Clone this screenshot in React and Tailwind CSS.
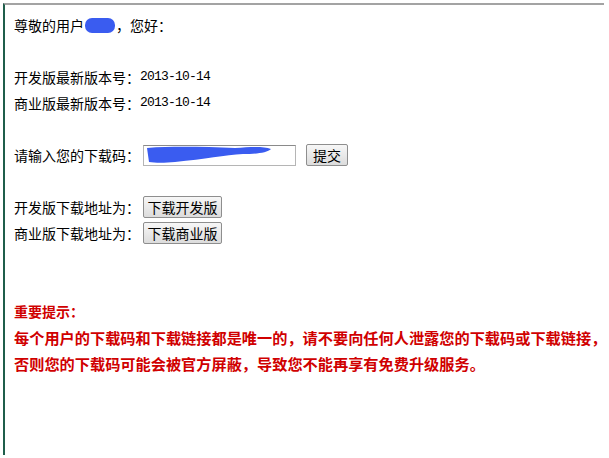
import React from "react";

const Line = ({ children, className = "" }) => (
  <div className={`h-[26px] flex items-center whitespace-nowrap ${className}`}>{children}</div>
);

const Btn = ({ children, className = "" }) => (
  <button
    className={`h-[22px] flex items-center justify-center border border-[#8e8e8e] rounded-[2px] bg-gradient-to-b from-[#f7f7f7] to-[#dcdcdc] text-[14px] text-black ${className}`}
  >
    {children}
  </button>
);

const Date = ({ children }) => (
  <span className="font-['Liberation_Mono',monospace] text-[13px] tracking-[-0.8px]">{children}</span>
);

export default function App() {
  return (
    <div className="w-[609px] h-[458px] bg-white pl-[3px] pt-[3px] pr-[5px] font-['Noto_Sans_CJK_SC',sans-serif] text-[14px] text-black">
      <div className="h-[452px] border-l-2 border-l-[#1f5e4b] border-t-2 border-t-[#a3a3a3] pl-[9px] pt-[7px]">
        <Line>
          尊敬的用户
          {/* redacted name */}
          <span className="inline-block w-[30px] h-[15px] rounded-[7px] bg-[#3a5cf0] mx-[1px]" />
          ，您好：
        </Line>
        <Line />
        <Line>
          开发版最新版本号：<Date>2013-10-14</Date>
        </Line>
        <Line>
          商业版最新版本号：<Date>2013-10-14</Date>
        </Line>
        <Line />
        <Line>
          请输入您的下载码：
          <div className="ml-[3px] w-[153px] h-[21px] border border-[#b5b5b5] border-t-[#8a8a8a] bg-white flex items-center pl-[1px]">
            <svg width="128" height="20" viewBox="0 0 128 20">
              <path
                d="M2 3 C30 1 60 2 90 3 C105 2 118 1 126 4 C122 8 110 9 98 9 C80 10 60 14 30 17 C20 18 10 18 4 17 Z"
                fill="#3a5cf0"
              />
            </svg>
          </div>
          <Btn className="ml-[10px] w-[42px]">提交</Btn>
        </Line>
        <Line />
        <Line>
          开发版下载地址为：<Btn className="ml-[3px] w-[79px]">下载开发版</Btn>
        </Line>
        <Line>
          商业版下载地址为：<Btn className="ml-[3px] w-[79px]">下载商业版</Btn>
        </Line>
        <Line />
        <Line />
        <div className="text-[#d00000] font-bold text-[15.2px]">
          <Line className="text-[14px]">重要提示：</Line>
          <Line>每个用户的下载码和下载链接都是唯一的，请不要向任何人泄露您的下载码或下载链接，</Line>
          <Line>否则您的下载码可能会被官方屏蔽，导致您不能再享有免费升级服务。</Line>
        </div>
      </div>
    </div>
  );
}
